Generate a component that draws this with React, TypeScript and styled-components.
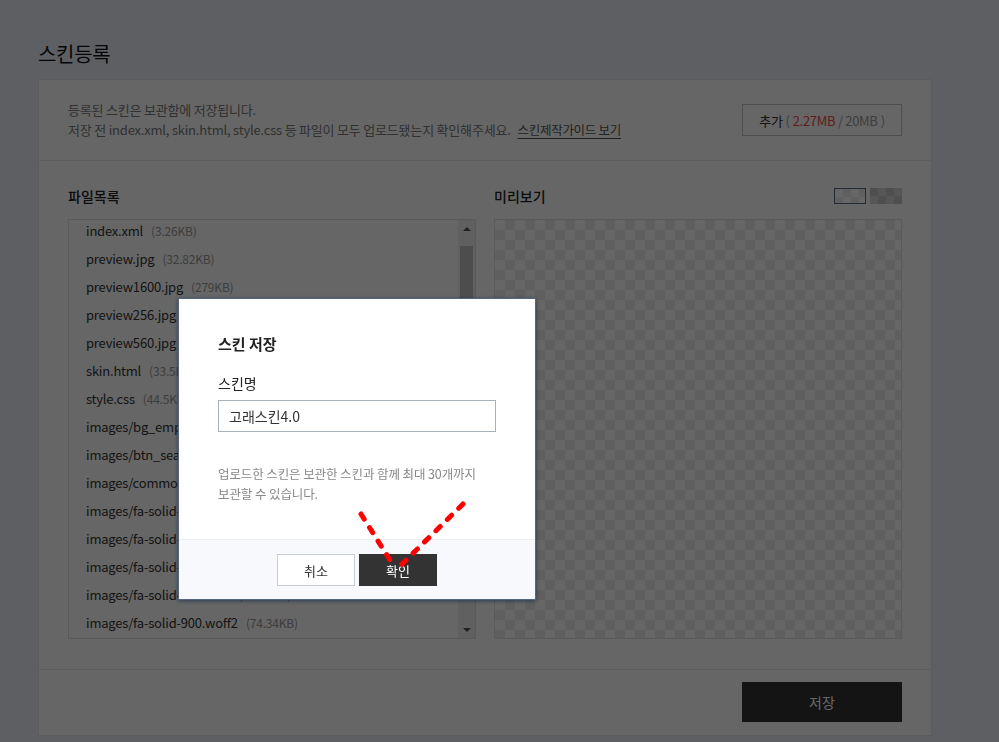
import React from "react";
import styled, { createGlobalStyle } from "styled-components";

const Global = createGlobalStyle`
  html, body { margin: 0; padding: 0; }
  body {
    background: #eceef5;
    font-family: "Noto Sans CJK KR", "Noto Sans", sans-serif;
    color: #333;
    width: 999px;
    height: 742px;
    overflow: hidden;
  }
  * { box-sizing: border-box; }
`;

const Page = styled.div`
  padding: 40px 0 0 38px;
  width: 999px;
  height: 742px;
`;

const Title = styled.h1`
  margin: 0 0 11px;
  font-size: 20px;
  line-height: 28px;
  font-weight: 400;
  color: #111;
  letter-spacing: -0.3px;
`;

const Panel = styled.section`
  width: 894px;
  border: 1px solid #e4e4e4;
  background: #fff;
`;

const InfoBar = styled.div`
  display: flex;
  align-items: center;
  justify-content: space-between;
  height: 81px;
  padding: 0 29px;
  border-bottom: 1px solid #ececec;
`;

const InfoText = styled.p`
  margin: 0;
  font-size: 13px;
  line-height: 20px;
  letter-spacing: -0.2px;
  color: #7a7a7a;
`;

const GuideLink = styled.a`
  margin-left: 7px;
  font-size: 12.5px;
  letter-spacing: -0.3px;
  color: #555;
  text-decoration: underline;
  text-underline-offset: 3px;
`;

const AddButton = styled.button`
  width: 160px;
  height: 32px;
  border: 1px solid #c4c4c4;
  background: #fff;
  font-family: inherit;
  font-size: 13px;
  letter-spacing: -0.3px;
  color: #333;
  display: flex;
  align-items: center;
  justify-content: center;
  gap: 3px;
  padding: 0;
`;

const Muted = styled.span`
  color: #999;
`;

const Used = styled.span`
  color: #f24a4a;
`;

const FilesSection = styled.div`
  display: grid;
  grid-template-columns: 408px 408px;
  column-gap: 18px;
  padding: 25px 29px 30px;
  border-bottom: 1px solid #ececec;
`;

const Column = styled.div`
  display: flex;
  flex-direction: column;
`;

const ColumnHead = styled.div`
  display: flex;
  align-items: center;
  justify-content: space-between;
  height: 20px;
  margin-bottom: 13px;
`;

const HeadTitle = styled.h2`
  margin: 0;
  font-size: 14px;
  line-height: 20px;
  font-weight: 500;
  color: #222;
`;

const Toggles = styled.div`
  display: flex;
  gap: 4px;
`;

const Toggle = styled.span<{ $dark?: boolean; $active?: boolean }>`
  display: block;
  width: 32px;
  height: 16px;
  border: ${(p) => (p.$active ? "1px solid #5b6a84" : "none")};
  background-color: ${(p) => (p.$dark ? "#c6c6c6" : "#fff")};
  background-image: linear-gradient(45deg, ${(p) => (p.$dark ? "#d6d6d6" : "#f0f0f0")} 25%, transparent 25%, transparent 75%, ${(p) => (p.$dark ? "#d6d6d6" : "#f0f0f0")} 75%),
    linear-gradient(45deg, ${(p) => (p.$dark ? "#d6d6d6" : "#f0f0f0")} 25%, transparent 25%, transparent 75%, ${(p) => (p.$dark ? "#d6d6d6" : "#f0f0f0")} 75%);
  background-size: 16px 16px;
  background-position: 0 0, 8px 8px;
`;

const ListBox = styled.div`
  display: flex;
  height: 420px;
  border: 1px solid #e2e2e2;
  background: #fff;
  overflow: hidden;
`;

const FileList = styled.ul`
  flex: 1;
  margin: -3px 0 0;
  padding: 0;
  list-style: none;
`;

const FileItem = styled.li`
  height: 28px;
  line-height: 28px;
  padding-left: 17px;
  font-size: 13px;
  letter-spacing: -0.2px;
  color: #333;
  white-space: nowrap;
`;

const FileSize = styled.span`
  margin-left: 8px;
  font-size: 12px;
  color: #9a9a9a;
`;

const ScrollTrack = styled.div`
  width: 17px;
  display: flex;
  flex-direction: column;
  align-items: center;
  background: #f0f0f0;
`;

const ScrollArrow = styled.div<{ $down?: boolean }>`
  height: 17px;
  width: 17px;
  display: flex;
  align-items: center;
  justify-content: center;
  &::after {
    content: "";
    border-left: 4px solid transparent;
    border-right: 4px solid transparent;
    ${(p) => (p.$down ? "border-top: 4px solid #505050;" : "border-bottom: 4px solid #505050;")}
  }
`;

const ScrollThumb = styled.div`
  margin-top: 9px;
  width: 13px;
  height: 190px;
  background: #c1c1c1;
`;

const ScrollSpacer = styled.div`
  flex: 1;
`;

const Preview = styled.div`
  height: 420px;
  border: 1px solid #e2e2e2;
  background-color: #fff;
  background-image: linear-gradient(45deg, #eeeeee 25%, transparent 25%, transparent 75%, #eeeeee 75%),
    linear-gradient(45deg, #eeeeee 25%, transparent 25%, transparent 75%, #eeeeee 75%);
  background-size: 20px 20px;
  background-position: 0 0, 10px 10px;
`;

const Footer = styled.div`
  display: flex;
  justify-content: flex-end;
  padding: 12px 29px 13px;
`;

const SaveButton = styled.button`
  width: 160px;
  height: 40px;
  border: none;
  background: #333;
  color: #fff;
  font-family: inherit;
  font-size: 14px;
`;

const Dim = styled.div`
  position: fixed;
  inset: 0;
  background: rgba(0, 0, 0, 0.6);
`;

const Modal = styled.div`
  position: fixed;
  left: 178px;
  top: 298px;
  width: 358px;
  background: #fff;
  border: 1px solid #55657e;
  box-shadow: 0 1px 4px rgba(20, 40, 70, 0.7);
`;

const ModalBody = styled.div`
  padding: 34px 39px 35px;
`;

const ModalTitle = styled.h3`
  margin: 0 0 17px;
  font-size: 15px;
  line-height: 22px;
  font-weight: 700;
  color: #222;
`;

const FieldLabel = styled.label`
  display: block;
  margin-bottom: 6px;
  font-size: 14px;
  line-height: 22px;
  color: #222;
`;

const TextInput = styled.input`
  display: block;
  width: 278px;
  height: 32px;
  padding: 0 10px;
  border: 1px solid #a9b0bd;
  font-family: inherit;
  font-size: 14px;
  color: #333;
  outline: none;
`;

const HelpText = styled.p`
  margin: 32px 0 0;
  font-size: 12.5px;
  line-height: 20px;
  letter-spacing: -0.1px;
  color: #888;
`;

const ModalFooter = styled.div`
  display: flex;
  justify-content: center;
  gap: 4px;
  padding: 14px 0 13px;
  border-top: 1px solid #eceef2;
  background: #f8f9fc;
`;

const ModalButton = styled.button<{ $primary?: boolean }>`
  width: 78px;
  height: 32px;
  border: 1px solid ${(p) => (p.$primary ? "#333" : "#c8ccd3")};
  background: ${(p) => (p.$primary ? "#333" : "#fff")};
  color: ${(p) => (p.$primary ? "#fff" : "#333")};
  font-family: inherit;
  font-size: 13px;
  padding: 0;
`;

const Marker = styled.svg`
  position: fixed;
  left: 0;
  top: 0;
  pointer-events: none;
`;

const files: [string, string][] = [
  ["index.xml", "3.26KB"],
  ["preview.jpg", "32.82KB"],
  ["preview1600.jpg", "279KB"],
  ["preview256.jpg", "15.21KB"],
  ["preview560.jpg", "48.11KB"],
  ["skin.html", "33.5KB"],
  ["style.css", "44.5KB"],
  ["images/bg_empty.png", "1.2KB"],
  ["images/btn_search.png", "1.1KB"],
  ["images/common.png", "6.4KB"],
  ["images/fa-solid-900.eot", "199.8KB"],
  ["images/fa-solid-900.svg", "812.5KB"],
  ["images/fa-solid-900.ttf", "199.5KB"],
  ["images/fa-solid-900.woff", "99.69KB"],
  ["images/fa-solid-900.woff2", "74.34KB"],
];

export default function App() {
  return (
    <>
      <Global />
      <Page>
        <Title>스킨등록</Title>
        <Panel>
          <InfoBar>
            <div>
              <InfoText>등록된 스킨은 보관함에 저장됩니다.</InfoText>
              <InfoText>
                저장 전 index.xml, skin.html, style.css 등 파일이 모두 업로드됐는지 확인해주세요.
                <GuideLink>스킨제작가이드 보기</GuideLink>
              </InfoText>
            </div>
            <AddButton>
              추가 <Muted>(</Muted>
              <span>
                <Used>2.27MB</Used> <Muted>/ 20MB</Muted>
              </span>
              <Muted>)</Muted>
            </AddButton>
          </InfoBar>
          <FilesSection>
            <Column>
              <ColumnHead>
                <HeadTitle>파일목록</HeadTitle>
              </ColumnHead>
              <ListBox>
                <FileList>
                  {files.map(([name, size]) => (
                    <FileItem key={name}>
                      {name}
                      <FileSize>({size})</FileSize>
                    </FileItem>
                  ))}
                </FileList>
                <ScrollTrack>
                  <ScrollArrow />
                  <ScrollThumb />
                  <ScrollSpacer />
                  <ScrollArrow $down />
                </ScrollTrack>
              </ListBox>
            </Column>
            <Column>
              <ColumnHead>
                <HeadTitle>미리보기</HeadTitle>
                <Toggles>
                  <Toggle $active />
                  <Toggle $dark />
                </Toggles>
              </ColumnHead>
              <Preview />
            </Column>
          </FilesSection>
          <Footer>
            <SaveButton>저장</SaveButton>
          </Footer>
        </Panel>
      </Page>
      <Dim />
      <Modal>
        <ModalBody>
          <ModalTitle>스킨 저장</ModalTitle>
          <FieldLabel>스킨명</FieldLabel>
          <TextInput defaultValue="고래스킨4.0" />
          <HelpText>
            업로드한 스킨은 보관한 스킨과 함께 최대 30개까지
            <br />
            보관할 수 있습니다.
          </HelpText>
        </ModalBody>
        <ModalFooter>
          <ModalButton>취소</ModalButton>
          <ModalButton $primary>확인</ModalButton>
        </ModalFooter>
      </Modal>
      <Marker width="999" height="742" viewBox="0 0 999 742">
        <g stroke="#ff0000" strokeWidth="5" strokeLinecap="round" strokeDasharray="6 10" fill="none">
          <path d="M361 514 L395 568" />
          <path d="M463 504 L397 569" />
        </g>
      </Marker>
    </>
  );
}
